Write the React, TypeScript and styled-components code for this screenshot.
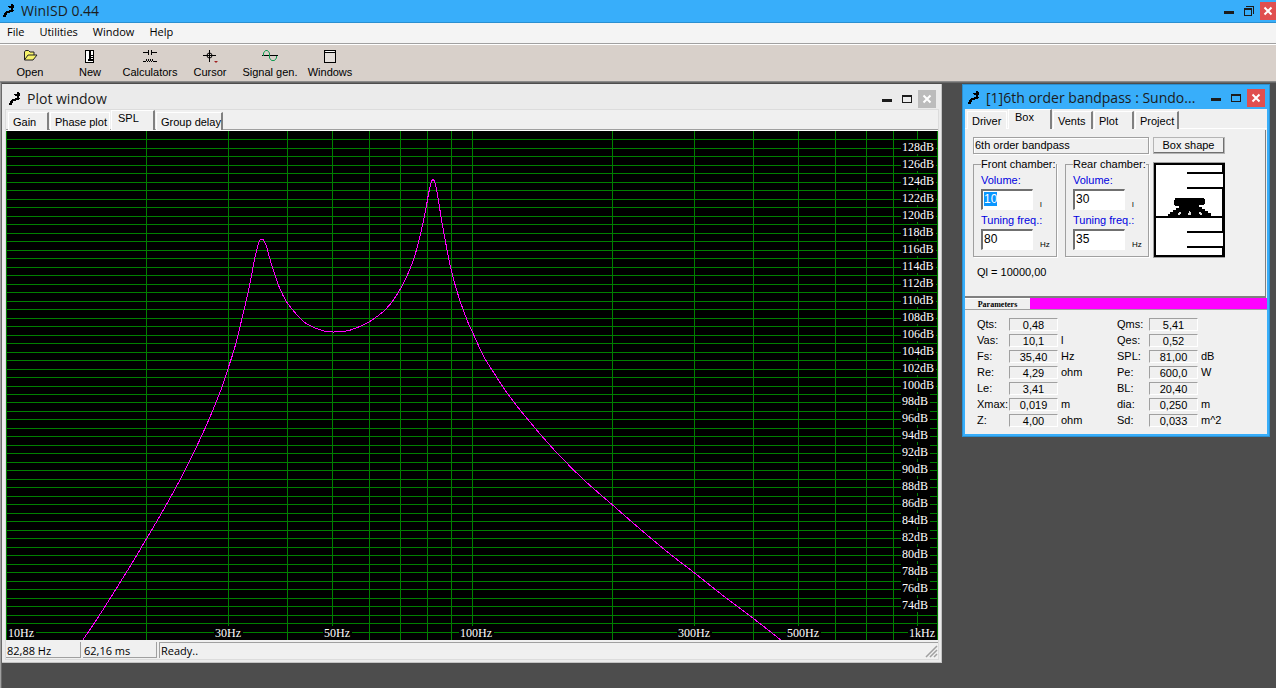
import React, { useEffect, useLayoutEffect, useRef, useState } from "react";
import styled, { createGlobalStyle, css } from "styled-components";

const ui = `"Liberation Sans", Arial, sans-serif`;
const caption = `"Open Sans", "Segoe UI", sans-serif`;
const serif = `"Liberation Serif", "Times New Roman", serif`;

const Global = createGlobalStyle`
  *, *::before, *::after { box-sizing: border-box; }
  body { margin: 0; background: #4d4d4d; font: 11px/13px ${ui}; color: #000; }
  button, input { font: inherit; color: inherit; }
  button { margin: 0; padding: 0; border: 0; background: none; border-radius: 0; }
`;

const Frame = styled.div`
  display: flex;
  flex-direction: column;
  height: 100vh;
  min-height: 520px;
`;

/* ---------- window chrome ---------- */

type Tone = "main" | "plot" | "box";

const TitleBar = styled.header<{ $tone: Tone }>`
  display: flex;
  align-items: center;
  flex: none;
  color: #1c1c1c;
  ${({ $tone }) =>
    $tone === "main"
      ? css`
          height: 23px;
          padding-left: 3px;
          background: #38aefa;
          border-bottom: 1px solid #2b8fd0;
        `
      : $tone === "plot"
      ? css`
          height: 25px;
          padding: 4px 5px 0 7px;
          background: #ebebeb;
        `
      : css`
          height: 24px;
          padding: 2px 2px 0 3px;
          background: #38aefa;
        `}
`;

const Title = styled.h1`
  flex: 1;
  min-width: 0;
  margin: 0 0 0 6px;
  overflow: hidden;
  white-space: nowrap;
  font: 14px/20px ${caption};
`;

const Controls = styled.div`
  display: flex;
  gap: 2px;
`;

const WinButton = styled.button<{ $fill?: string; $narrow?: boolean }>`
  display: grid;
  place-items: center;
  width: ${(p) => (p.$narrow ? 16 : 18)}px;
  height: 18px;
  background: ${(p) => p.$fill ?? "transparent"};
  svg { display: block; }
`;

const Logo = () => (
  <svg width="12" height="14" viewBox="0 0 12 14" shapeRendering="crispEdges" aria-hidden="true">
    <path d="M8 0h2v1h1v3h-1v2h1v1h-1v1H7v1H4v2H3v2H0v-2h1V9h1V8h1V7h3V6h2V4H6V3H5V2h3z" fill="#000" />
  </svg>
);

const WindowControls = ({ tone }: { tone: Tone }) => (
  <Controls>
    <WinButton aria-label="Minimize">
      <svg width="12" height="12" shapeRendering="crispEdges">
        <path d="M1 6h10v3H1z" fill="#1c1c1c" />
      </svg>
    </WinButton>
    <WinButton aria-label={tone === "main" ? "Restore" : "Maximize"}>
      <svg width="12" height="12" shapeRendering="crispEdges" fill="none" stroke="#1c1c1c">
        {tone === "main" ? (
          <path d="M1 3.500h8M1 4.500h8M1.500 3v8M8.500 3v8M1 10.500h8M3 1.500h8M10.500 1v8" />
        ) : (
          <path d="M1 2.500h10M1 3.500h10M1.500 2v8M10.500 2v8M1 9.500h10" />
        )}
      </svg>
    </WinButton>
    <WinButton aria-label="Close" $fill={tone === "plot" ? "#bcbcbc" : "#e04f4f"} $narrow={tone === "main"}>
      <svg width="12" height="12" stroke="#fff" strokeWidth="2">
        <path d="M2.500 2.500l7 7M9.500 2.500l-7 7" />
      </svg>
    </WinButton>
  </Controls>
);

/* ---------- menu and toolbar ---------- */

const MenuBar = styled.nav`
  display: flex;
  gap: 15px;
  flex: none;
  height: 21px;
  padding: 0 7px 2px;
  background: #f4f4f4;
  border-bottom: 1px solid #a0a0a0;
`;

const MenuItem = styled.button`
  font: 11px/18px ${caption};
`;

const ToolBar = styled.div`
  display: flex;
  flex: none;
  height: 38px;
  padding-top: 2px;
  background: #d8d0ca;
  border-top: 1px solid #fff;
  border-bottom: 1px solid #8a8a8a;
`;

const Tool = styled.button`
  display: flex;
  flex-direction: column;
  align-items: center;
  gap: 2px;
  width: 60px;
  padding-top: 1px;
  white-space: nowrap;
`;

const OpenIcon = () => (
  <svg width="16" height="16">
    <path d="M2.500 12V4l1-1.500h3L8 4h4v3M2.500 12L6 7h9l-4 5z" fill="#f7f36b" stroke="#222" />
  </svg>
);
const NewIcon = () => (
  <svg width="16" height="16" shapeRendering="crispEdges">
    <path d="M3 2h9v13H3z" />
    <path d="M4 3h7v11H4z" fill="#fff" />
    <path d="M7 3h2v8H7zM9 7h2v1H9zM9 9h2v1H9zM6 11h5v2H6z" />
  </svg>
);
const CalcIcon = () => (
  <svg width="16" height="16" stroke="#000" fill="none" shapeRendering="crispEdges">
    <path d="M1 4.500h6M9 4.500h6M6.500 2v5M9.500 2v5M1 13.500h3M12 13.500h3" />
    <path d="M4.500 13v-2M6.500 13v-2M8.500 13v-2M10.500 13v-2M3.500 13v1M5.500 13v1M7.500 13v1M9.500 13v1M11.500 13v1" />
  </svg>
);
const CursorIcon = () => (
  <svg width="16" height="16" stroke="#000" fill="none">
    <path d="M7.500 2v12M1 7.500h13" shapeRendering="crispEdges" />
    <circle cx="7.500" cy="7.500" r="2.500" />
    <path d="M12 13h4l-2 2z" fill="#a02020" stroke="none" />
  </svg>
);
const SignalIcon = () => (
  <svg width="16" height="16" fill="none">
    <path d="M0 7.500h16" stroke="#000" shapeRendering="crispEdges" />
    <path d="M1.500 8V5l2-2.500h2l2 2.500v5l2 2.500h3l2-2.500V8" stroke="#109a50" />
  </svg>
);
const WindowsIcon = () => (
  <svg width="16" height="16" shapeRendering="crispEdges">
    <path d="M2.500 2.500h11v12h-11zM2 4.500h12" fill="#e4dfdb" stroke="#000" />
    <path d="M4 3h8v1H4z" fill="#fff" />
  </svg>
);

const tools: [string, () => React.JSX.Element][] = [
  ["Open", OpenIcon],
  ["New", NewIcon],
  ["Calculators", CalcIcon],
  ["Cursor", CursorIcon],
  ["Signal gen.", SignalIcon],
  ["Windows", WindowsIcon],
];

/* ---------- workspace ---------- */

const Workspace = styled.main`
  display: flex;
  align-items: flex-start;
  gap: 20px;
  flex: 1;
  min-height: 0;
  padding: 1px 6px 25px 0;
  background: #4d4d4d;
  border-left: 1px solid #a0a0a0;
  border-top: 1px solid #696969;
  box-shadow: inset 1px 0 #696969;
`;

const PlotWindow = styled.section`
  display: flex;
  flex-direction: column;
  flex: 1;
  min-width: 0;
  height: 100%;
  margin-left: 1px;
  background: #ebebeb;
  border-right: 1px solid #c4c4c4;
  border-bottom: 1px solid #c4c4c4;
`;

const PlotClient = styled.div`
  display: flex;
  flex-direction: column;
  flex: 1;
  min-height: 0;
  margin: 0 2px 2px 3px;
  border: 1px solid #dcdcdc;
  background: #f0f0f0;
`;

const TabStrip = styled.div<{ $bottom: string; $page: string }>`
  display: flex;
  align-items: flex-end;
  gap: 1px;
  flex: none;
  height: 21px;
  padding: 0 2px;
  border-bottom: 1px solid ${(p) => p.$page};
  box-shadow: inset 0 -1px ${(p) => p.$bottom};
`;

const Tab = styled.button<{ $w: number }>`
  flex: none;
  width: ${(p) => p.$w}px;
  height: 18px;
  padding: 1px 0 0 4px;
  text-align: left;
  white-space: nowrap;
  background: #f0f0f0;
  border: 1px solid #fff;
  border-right: 2px solid #808080;
  border-bottom-width: 0;
  &[aria-selected="true"] {
    height: 20px;
    padding: 0 0 4px 6px;
  }
  &:has(+ [aria-selected="true"]) {
    border-right: 1px solid #fff;
  }
`;

/* ---------- frequency response chart ---------- */

const ChartBox = styled.div`
  flex: 1;
  min-height: 0;
  overflow: hidden;
  background: #000;
  svg { display: block; position: absolute; }
  text { font: 12px ${serif}; fill: #fff; }
`;

const BASE_W = 932;
const BASE_H = 509;

type Pt = [number, number];

/* SPL trace sampled on a 932 x 509 grid (10 Hz..1 kHz, 130..70 dB) */
const trace: Pt[] = [
  [76, 509], [91.7, 485.7], [109, 458.3], [124.7, 433], [140.3, 406.7], [154.7, 382.3], [169, 356.7],
  [182.3, 331.3], [194.7, 305.3], [202.3, 288.3], [209.3, 271.3], [216, 254.3], [222.3, 234.7],
  [226.7, 221.3], [231.3, 204.7], [236.3, 183.3], [241.3, 162.3], [245, 144], [248.3, 126.3],
  [251.7, 113], [253.3, 109], [255.3, 107.5], [257.3, 109], [260, 115], [262.7, 125], [267, 139],
  [271.7, 153], [276.7, 164.3], [281.7, 172.7], [289, 181.7], [297.3, 190.3], [305.7, 195.3],
  [314.7, 198.7], [322.3, 200.3], [328, 200.5], [335.7, 200.2], [344, 198.5], [354, 194.7],
  [363.3, 190], [372.3, 183.7], [379, 178], [387.3, 168], [394.7, 156], [400.7, 144], [407.3, 127.3],
  [412.3, 109.7], [416.3, 92.3], [419.7, 75.7], [421.7, 64], [423.7, 54.7], [425.3, 49.3],
  [426.7, 48.3], [428.3, 50.7], [430.3, 59], [432.7, 74], [435.7, 92.3], [439.7, 114], [444, 135.7],
  [448.3, 152.3], [454, 170.7], [460.7, 189], [466.7, 202.3], [477.3, 225], [489.7, 245],
  [500, 260.7], [514, 279], [534, 303], [552.3, 323.3], [577.3, 348.3], [606.3, 373.7],
  [630.7, 395], [660.7, 420.3], [688.3, 441.7], [717.3, 464.7], [747.3, 487.3], [775, 509],
];

/* cubic spline whose tangents are weighted by the chord lengths */
const smooth = (pts: Pt[]) => {
  const chord = (a: Pt, b: Pt) => Math.hypot(b[0] - a[0], b[1] - a[1]);
  const tangent = (i: number): Pt => {
    const a = pts[Math.max(i - 1, 0)];
    const b = pts[Math.min(i + 1, pts.length - 1)];
    const len = chord(a, pts[i]) + chord(pts[i], b);
    return [(b[0] - a[0]) / len, (b[1] - a[1]) / len];
  };
  return pts.slice(1).reduce((d, p, i) => {
    const a = pts[i];
    const k = chord(a, p) / 3;
    const m = tangent(i);
    const n = tangent(i + 1);
    return `${d}C${a[0] + m[0] * k} ${a[1] + m[1] * k} ${p[0] - n[0] * k} ${p[1] - n[1] * k} ${p[0]} ${p[1]}`;
  }, `M${pts[0][0]} ${pts[0][1]}`);
};

const gridHz = [10, 20, 30, 40, 50, 60, 70, 80, 90, 100, 200, 300, 400, 500, 600, 700, 800, 900, 1000];

/* frequency, caption, start of the caption relative to its grid line, width */
const labelHz: [number, string, number, number][] = [
  [10, "10Hz", 2, 28],
  [30, "30Hz", -13, 28],
  [50, "50Hz", -8, 28],
  [100, "100Hz", -12, 34],
  [300, "300Hz", -16, 34],
  [500, "500Hz", -11, 34],
  [1000, "1kHz", -29, 28],
];

const Chart = () => {
  const ref = useRef<HTMLDivElement>(null);
  const [size, setSize] = useState({ w: BASE_W, h: BASE_H });

  useLayoutEffect(() => {
    const el = ref.current!;
    const read = () => setSize({ w: el.clientWidth, h: el.clientHeight });
    read();
    const ro = new ResizeObserver(read);
    ro.observe(el);
    return () => ro.disconnect();
  }, []);

  const { w, h } = size;
  const xOf = (hz: number) => Math.round((Math.log10(hz / 10) / 2) * w);
  const yOf = (db: number) => Math.round(((130 - db) / 60) * h);
  const path = smooth(trace.map(([x, y]) => [(x * w) / BASE_W, (y * h) / BASE_H]));
  const rows = Array.from({ length: 59 }, (_, i) => 129 - i);
  const dbs = Array.from({ length: 28 }, (_, i) => 128 - i * 2);

  return (
    <ChartBox ref={ref}>
      <svg width={w} height={h} role="img" aria-label="SPL response">
        <g fill="#008000" shapeRendering="crispEdges">
          {gridHz.map((f) => (
            <rect key={f} x={Math.min(xOf(f), w - 1)} width="1" height={h} />
          ))}
          {rows.map((d) => (
            <rect key={d} y={yOf(d)} width={w} height="1" />
          ))}
        </g>
        <path d={path} transform="translate(.5 .5)" fill="none" stroke="#ff00ff" shapeRendering="crispEdges" />
        {dbs.map((d) => (
          <g key={d}>
            <rect x={w - 37} y={yOf(d) - 8} width={d < 100 ? 29 : 35} height="14" />
            <text x={w - 36} y={yOf(d) + 3}>{`${d}dB`}</text>
          </g>
        ))}
        {labelHz.map(([f, t, dx, lw]) => (
          <g key={f}>
            <rect x={xOf(f) + dx - 1} y={h - 14} width={lw + 1} height="14" />
            <text x={xOf(f) + dx} y={h - 3}>{t}</text>
          </g>
        ))}
      </svg>
    </ChartBox>
  );
};

const StatusBar = styled.footer`
  display: flex;
  gap: 2px;
  flex: none;
  height: 19px;
  padding: 2px 0 1px;
  font: 11px/18px ${caption};
`;

const StatusCell = styled.div<{ $w?: number }>`
  flex: ${(p) => (p.$w ? `0 0 ${p.$w}px` : "1")};
  display: flex;
  justify-content: space-between;
  padding-left: 1px;
  border: solid #a0a0a0;
  border-width: ${(p) => (p.$w ? "0 1px 1px 0" : "1px 0 0 1px")};
  line-height: ${(p) => (p.$w ? 18 : 16)}px;
  svg { display: block; align-self: flex-end; }
`;

/* ---------- box window ---------- */

const BoxWindow = styled.section`
  flex: none;
  width: 308px;
  background: #f0f0f0;
  border: 3px solid #38aefa;
  border-top-width: 1px;
  outline: 1px solid #2b8fd0;
  outline-offset: -1px;
`;

const Page = styled.div`
  margin-right: 1px;
  padding: 7px 0 17px 8px;
  border-right: 1px solid #808080;
  border-bottom: 2px solid #808080;
`;

const Columns = styled.div`
  display: flex;
  gap: 4px;
`;

const Left = styled.div`
  width: 176px;
`;

const Etched = styled.div`
  height: 17px;
  padding: 1px;
  border: 1px solid #a0a0a0;
  box-shadow: inset 1px 1px #fff, 1px 1px #fff;
`;

const Chambers = styled.div`
  display: flex;
  gap: 8px;
  margin-top: 4px;
`;

const Chamber = styled.fieldset`
  width: 84px;
  min-width: 0;
  height: 99px;
  margin: 0;
  padding: 3px 0 0 7px;
  border: 1px solid #a0a0a0;
  box-shadow: 1px 1px #fff;
`;

const Legend = styled.legend`
  padding: 0;
  white-space: nowrap;
`;

const Field = styled.label`
  display: block;
  height: 40px;
  color: #0000e0;
`;

const Entry = styled.span`
  display: flex;
  align-items: flex-end;
  gap: 7px;
  margin-top: 2px;
  color: #000;
  font-size: 8px;
  line-height: 11px;
`;

const TextBox = styled.input`
  width: 52px;
  height: 21px;
  padding: 0 0 2px 1px;
  border: 1px solid #fff;
  border-top: 2px solid #707070;
  border-left: 2px solid #707070;
  border-radius: 0;
  outline: 0;
  background: #fff;
  font: 12px/13px ${ui};
  &::selection { background: #0a96ff; color: #fff; }
`;

const Right = styled.div`
  display: flex;
  flex-direction: column;
  gap: 8px;
  width: 72px;
`;

const ShapeButton = styled.button`
  height: 17px;
  padding-top: 1px;
  border: 1px solid #fff;
  border-right: 2px solid #707070;
  border-bottom: 2px solid #707070;
  outline: 1px solid #b4b4b4;
  outline-offset: -1px;
`;

const Ql = styled.p`
  margin: 8px 0 0 4px;
`;

const ParamHead = styled.div`
  display: flex;
  height: 12px;
  background: #ff00ff;
  border-bottom: 1px solid #a0a0a0;
  h2 {
    width: 65px;
    margin: 0;
    background: #f0f0f0;
    border-top: 1px solid #fff;
    text-align: center;
    font: bold 8px/11px ${serif};
  }
`;

const Params = styled.table`
  width: 290px;
  margin: 6px 0 6px 12px;
  border-collapse: collapse;
  table-layout: fixed;
  th, td { height: 16px; padding: 0; font-weight: normal; text-align: left; white-space: nowrap; }
`;

const Value = styled.output`
  display: block;
  width: 49px;
  height: 13px;
  line-height: 12px;
  text-align: center;
  border: 1px solid #fff;
  border-top-color: #a0a0a0;
  border-left-color: #a0a0a0;
`;

const Unit = styled.span`
  padding-left: 3px;
`;

const params: string[][] = [
  ["Qts:", "0,48", "", "Qms:", "5,41", ""],
  ["Vas:", "10,1", "l", "Qes:", "0,52", ""],
  ["Fs:", "35,40", "Hz", "SPL:", "81,00", "dB"],
  ["Re:", "4,29", "ohm", "Pe:", "600,0", "W"],
  ["Le:", "3,41", "", "BL:", "20,40", ""],
  ["Xmax:", "0,019", "m", "dia:", "0,250", "m"],
  ["Z:", "4,00", "ohm", "Sd:", "0,033", "m^2"],
];

const ParamCol = styled.col<{ $w: number }>`
  width: ${(p) => p.$w}px;
`;

const BoxDiagram = () => (
  <svg width="72" height="96" viewBox="0 0 72 96" shapeRendering="crispEdges" aria-hidden="true">
    <path d="M0 0h72v96H0z" fill="#a0a0a0" />
    <path d="M1 1h71v94H1z" />
    <path d="M3 3h66v7H34v2h36v13H34v2h35v27H3zM3 56h66v13H34v2h36v13H34v2h35v7H3z" fill="#fff" />
    <path d="M22 36h29v1h1v5h-1v1h-5v2h3v2h3v2h3v2h3v4H15v-3h2v-2h3v-2h3v-2h3v-2h-4v-1h-1v-5h1z" />
    <path d="M26 50h2v2h-1v1h-2v-2h1zM36 49h1v1h1v3h-3v-2h1zM46 50h2v1h1v2h-2v-1h-1z" fill="#ddd" />
  </svg>
);

const ChamberGroup = ({ name, vol, freq, active }: { name: string; vol: string; freq: string; active?: boolean }) => {
  const ref = useRef<HTMLInputElement>(null);
  useEffect(() => {
    if (active) {
      ref.current?.focus();
      ref.current?.select();
    }
  }, [active]);
  return (
    <Chamber>
      <Legend>{name}</Legend>
      <Field>
        Volume:
        <Entry><TextBox ref={ref} defaultValue={vol} />l</Entry>
      </Field>
      <Field>
        Tuning freq.:
        <Entry><TextBox defaultValue={freq} />Hz</Entry>
      </Field>
    </Chamber>
  );
};

const Tabs = ({ items, selected, bottom, page }: { items: [string, number][]; selected: string; bottom: string; page: string }) => (
  <TabStrip role="tablist" $bottom={bottom} $page={page}>
    {items.map(([t, w]) => (
      <Tab key={t} role="tab" aria-selected={t === selected} $w={w}>{t}</Tab>
    ))}
  </TabStrip>
);

export default function App() {
  return (
    <Frame>
      <Global />
      <TitleBar $tone="main">
        <Logo />
        <Title>WinISD 0.44</Title>
        <WindowControls tone="main" />
      </TitleBar>
      <MenuBar>
        {["File", "Utilities", "Window", "Help"].map((m) => <MenuItem key={m}>{m}</MenuItem>)}
      </MenuBar>
      <ToolBar>
        {tools.map(([label, Icon]) => (
          <Tool key={label}><Icon />{label}</Tool>
        ))}
      </ToolBar>
      <Workspace>
        <PlotWindow>
          <TitleBar $tone="plot">
            <Logo />
            <Title as="h2">Plot window</Title>
            <WindowControls tone="plot" />
          </TitleBar>
          <PlotClient>
            <Tabs
              items={[["Gain", 41], ["Phase plot", 60], ["SPL", 44], ["Group delay", 67]]}
              selected="SPL"
              bottom="#a0a0a0"
              page="#fff"
            />
            <Chart />
            <StatusBar>
              <StatusCell $w={75}>82,88 Hz</StatusCell>
              <StatusCell $w={74}>62,16 ms</StatusCell>
              <StatusCell>
                Ready..
                <svg width="13" height="13" stroke="#a0a0a0" strokeWidth="1.500">
                  <path d="M1 12L12 1M5 12l7-7M9 12l3-3" />
                </svg>
              </StatusCell>
            </StatusBar>
          </PlotClient>
        </PlotWindow>

        <BoxWindow>
          <TitleBar $tone="box">
            <Logo />
            <Title as="h2">[1]6th order bandpass : Sundo...</Title>
            <WindowControls tone="box" />
          </TitleBar>
          <Tabs
            items={[["Driver", 40], ["Box", 44], ["Vents", 40], ["Plot", 40], ["Project", 44]]}
            selected="Box"
            bottom="#fff"
            page="#f0f0f0"
          />
          <Page>
            <Columns>
              <Left>
                <Etched>6th order bandpass</Etched>
                <Chambers>
                  <ChamberGroup name="Front chamber:" vol="10" freq="80" active />
                  <ChamberGroup name="Rear chamber:" vol="30" freq="35" />
                </Chambers>
              </Left>
              <Right>
                <ShapeButton>Box shape</ShapeButton>
                <BoxDiagram />
              </Right>
            </Columns>
            <Ql>Ql = 10000,00</Ql>
          </Page>
          <ParamHead><h2>Parameters</h2></ParamHead>
          <Params>
            <colgroup>
              {[32, 49, 59, 32, 49, 69].map((w, i) => <ParamCol key={i} $w={w} />)}
            </colgroup>
            <tbody>
              {params.map((r) => (
                <tr key={r[0]}>
                  <th scope="row">{r[0]}</th>
                  <td><Value>{r[1]}</Value></td>
                  <td><Unit>{r[2]}</Unit></td>
                  <th scope="row">{r[3]}</th>
                  <td><Value>{r[4]}</Value></td>
                  <td><Unit>{r[5]}</Unit></td>
                </tr>
              ))}
            </tbody>
          </Params>
        </BoxWindow>
      </Workspace>
    </Frame>
  );
}
